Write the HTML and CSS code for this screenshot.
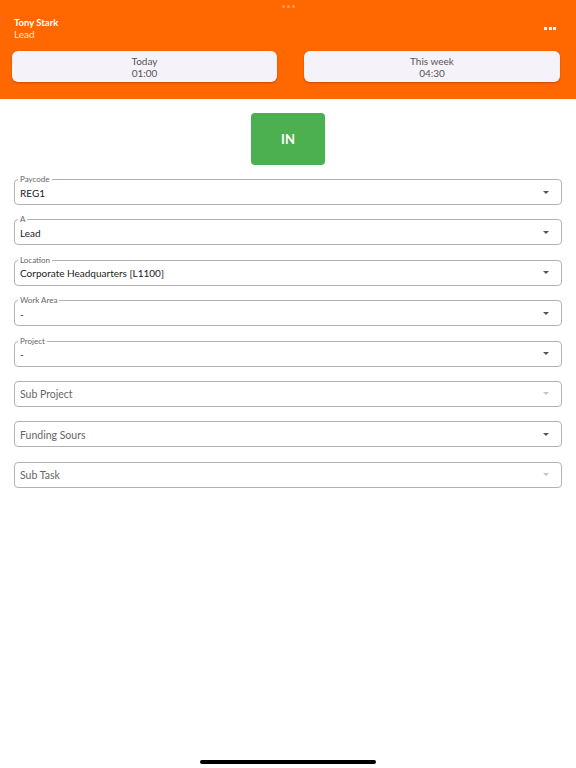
FILE: index.html
```html
<!DOCTYPE html>
<html>
 <head>
  <meta charset="utf-8">
  <title>Punch</title>
  <link rel="stylesheet" href="styles.css">
 </head>
 <body>
  <div class="header">
   <div class="grabber"><span></span><span></span><span></span></div>
   <div class="top">
    <div class="who">
     <div class="name">Tony Stark</div>
     <div class="role">Lead</div>
    </div>
    <div class="more"><span></span><span></span><span></span></div>
   </div>
   <div class="cards">
    <div class="card"><div>Today</div><div>01:00</div></div>
    <div class="card"><div>This week</div><div>04:30</div></div>
   </div>
  </div>

  <div class="main">
   <div class="punch"><button class="in">IN</button></div>

   <div class="fields">
    <div class="field"><span class="label">Paycode</span><span class="value">REG1</span><span class="arrow"></span></div>
    <div class="field"><span class="label">A</span><span class="value">Lead</span><span class="arrow"></span></div>
    <div class="field"><span class="label">Location</span><span class="value">Corporate Headquarters [L1100]</span><span class="arrow"></span></div>
    <div class="field"><span class="label">Work Area</span><span class="value">-</span><span class="arrow"></span></div>
    <div class="field"><span class="label">Project</span><span class="value">-</span><span class="arrow"></span></div>
    <div class="field"><span class="placeholder">Sub Project</span><span class="arrow off"></span></div>
    <div class="field"><span class="placeholder">Funding Sours</span><span class="arrow"></span></div>
    <div class="field"><span class="placeholder">Sub Task</span><span class="arrow off"></span></div>
   </div>
  </div>

  <div class="home"></div>
 </body>
</html>
```

FILE: styles.css
```css
body
{
 margin: 0;
 width: 576px;
 height: 768px;
 position: relative;
 background: #fff;
 font-family: Lato, "Noto Sans", sans-serif;
 color: #222;
}
.header
{
 background: #ff6700;
 height: 99px;
 box-sizing: border-box;
 padding-top: 5px;
}
.grabber
{
 display: flex;
 justify-content: center;
 gap: 2px;
 height: 3px;
}
.grabber span, .more span
{
 width: 3px;
 height: 3px;
 border-radius: 50%;
 background: #ffa060;
}
.top
{
 display: flex;
 justify-content: space-between;
 align-items: center;
 padding: 9px 20px 0 14px;
}
.name
{
 color: #fff;
 font-size: 9.5px;
 font-weight: 700;
 line-height: 12px;
}
.role
{
 color: #ffe2cf;
 font-size: 10px;
 line-height: 11px;
}
.more
{
 display: flex;
 gap: 1.5px;
}
.more span { background: #fff; border-radius: 0; }
.cards
{
 display: grid;
 grid-template-columns: 265px 256px;
 column-gap: 27px;
 padding: 11px 0 0 12px;
}
.card
{
 background: #f5f3f9;
 border-radius: 6px;
 height: 31px;
 box-shadow: 0 1px 2px rgba(0,0,0,0.25);
 display: flex;
 flex-direction: column;
 justify-content: center;
 align-items: center;
 font-size: 10px;
 line-height: 11.5px;
 padding-top: 2px;
 box-sizing: border-box;
 color: #555;
}
.main { padding: 14px 14px 0 14px; }
.punch { display: flex; justify-content: center; }
.in
{
 width: 74px;
 height: 52px;
 border: none;
 border-radius: 4px;
 background: #4caf50;
 color: #fff;
 font-family: inherit;
 font-size: 13px;
 font-weight: 700;
}
.fields
{
 display: flex;
 flex-direction: column;
 gap: 14.4px;
 padding-top: 14px;
}
.field
{
 position: relative;
 height: 26px;
 border: 1px solid #b3b3b3;
 border-radius: 4px;
 box-sizing: border-box;
 display: flex;
 align-items: center;
 padding: 0 5px;
}
.label
{
 position: absolute;
 left: 3px;
 top: -6px;
 padding: 0 2px;
 background: #fff;
 font-size: 8px;
 line-height: 10px;
 color: #666;
}
.value
{
 font-size: 10px;
 color: #222;
 padding-top: 1px;
}
.placeholder
{
 font-size: 10.5px;
 color: #666;
 padding-top: 1px;
}
.arrow
{
 margin-left: auto;
 margin-right: 7px;
 width: 0;
 height: 0;
 border-left: 3.5px solid transparent;
 border-right: 3.5px solid transparent;
 border-top: 3.5px solid #555;
}
.arrow.off { border-top-color: #c4c4c4; }
.home
{
 position: absolute;
 left: 200px;
 top: 760px;
 width: 176px;
 height: 4px;
 border-radius: 2px;
 background: #000;
}
```
